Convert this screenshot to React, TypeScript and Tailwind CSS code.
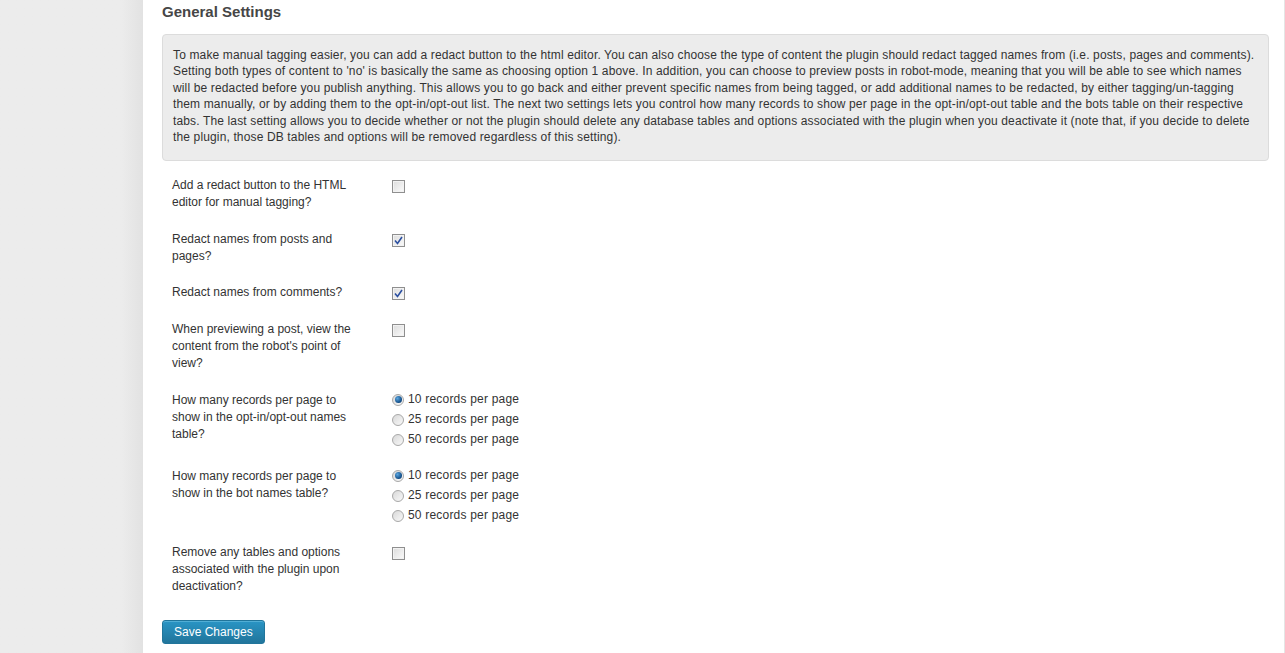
import type { ReactNode } from 'react'

const description =
  "To make manual tagging easier, you can add a redact button to the html editor. You can also choose the type of content the plugin should redact tagged names from (i.e. posts, pages and comments). Setting both types of content to 'no' is basically the same as choosing option 1 above. In addition, you can choose to preview posts in robot-mode, meaning that you will be able to see which names will be redacted before you publish anything. This allows you to go back and either prevent specific names from being tagged, or add additional names to be redacted, by either tagging/un-tagging them manually, or by adding them to the opt-in/opt-out list. The next two settings lets you control how many records to show per page in the opt-in/opt-out table and the bots table on their respective tabs. The last setting allows you to decide whether or not the plugin should delete any database tables and options associated with the plugin when you deactivate it (note that, if you decide to delete the plugin, those DB tables and options will be removed regardless of this setting)."

function Checkbox({ checked }: { checked?: boolean }) {
  return (
    <span className="mt-[3px] flex h-[13px] w-[13px] items-center justify-center border border-[#8f8f8f] bg-gradient-to-br from-[#dcdcdc] to-[#fbfbfb] shadow-[inset_0_0_0_1px_#f2f2f2]">
      {checked && (
        <svg width="9" height="9" viewBox="0 0 9 9">
          <path d="M1 4.5 L3.5 7.5 L8 1" fill="none" stroke="#2b4fa0" strokeWidth="1.6" />
        </svg>
      )}
    </span>
  )
}

function Radio({ checked }: { checked?: boolean }) {
  return (
    <span className="flex h-[12px] w-[12px] items-center justify-center rounded-full border border-[#a8a8a8] bg-gradient-to-br from-[#d8d8d8] to-[#f9f9f9]">
      {checked && (
        <span className="h-[7px] w-[7px] rounded-full bg-[radial-gradient(circle_at_35%_35%,#5aa6e0,#14508a_65%,#0e3358)]" />
      )}
    </span>
  )
}

function RadioGroup() {
  const options = ['10 records per page', '25 records per page', '50 records per page']
  return (
    <div className="flex flex-col gap-[4px]">
      {options.map((o, i) => (
        <label key={o} className="flex h-[16px] items-center gap-[4px] tracking-[0.2px]">
          <Radio checked={i === 0} />
          <span>{o}</span>
        </label>
      ))}
    </div>
  )
}

function Row({ label, children, tight }: { label: ReactNode; children: ReactNode; tight?: boolean }) {
  return (
    <div className={tight ? 'flex py-[9.5px] pl-[10px]' : 'flex py-[10px] pl-[10px]'}>
      <div className="w-[190px] leading-[17px]">{label}</div>
      <div className="ml-[30px] leading-[17px]">{children}</div>
    </div>
  )
}

export default function App() {
  return (
    <div className="flex h-[653px] font-['Liberation_Sans',Arial,sans-serif] text-[12px] text-[#333]">
      <aside className="w-[143px] shrink-0 bg-gradient-to-r from-[#ececec] from-[85%] to-[#e2e2e2]" />
      <main className="flex-1 border-r border-[#e5e5e5] bg-white pl-[19px] pr-[15px]">
        <h2 className="pt-[3px] text-[15px] leading-[18px] font-bold text-[#464646]">
          General Settings
        </h2>
        <div className="mt-[13px] rounded-[4px] border border-[#dcdcdc] bg-[#ececec] px-[10px] pt-[12px] pb-[15px] leading-[16.4px] tracking-[0.14px]">
          {description}
        </div>
        <div className="mt-[6.5px]">
          <Row tight label="Add a redact button to the HTML editor for manual tagging?">
            <Checkbox />
          </Row>
          <Row label="Redact names from posts and pages?">
            <Checkbox checked />
          </Row>
          <Row tight label="Redact names from comments?">
            <Checkbox checked />
          </Row>
          <Row label="When previewing a post, view the content from the robot's point of view?">
            <Checkbox />
          </Row>
          <Row label="How many records per page to show in the opt-in/opt-out names table?">
            <RadioGroup />
          </Row>
          <Row label="How many records per page to show in the bot names table?">
            <RadioGroup />
          </Row>
          <Row label="Remove any tables and options associated with the plugin upon deactivation?">
            <Checkbox />
          </Row>
        </div>
        <button className="mt-[15px] h-[24px] rounded-[3px] border border-[#21759b] bg-gradient-to-b from-[#2a95c5] to-[#21759b] px-[11px] text-[12px] text-white shadow-[inset_0_1px_0_rgba(120,200,230,0.5)]">
          Save Changes
        </button>
      </main>
    </div>
  )
}
